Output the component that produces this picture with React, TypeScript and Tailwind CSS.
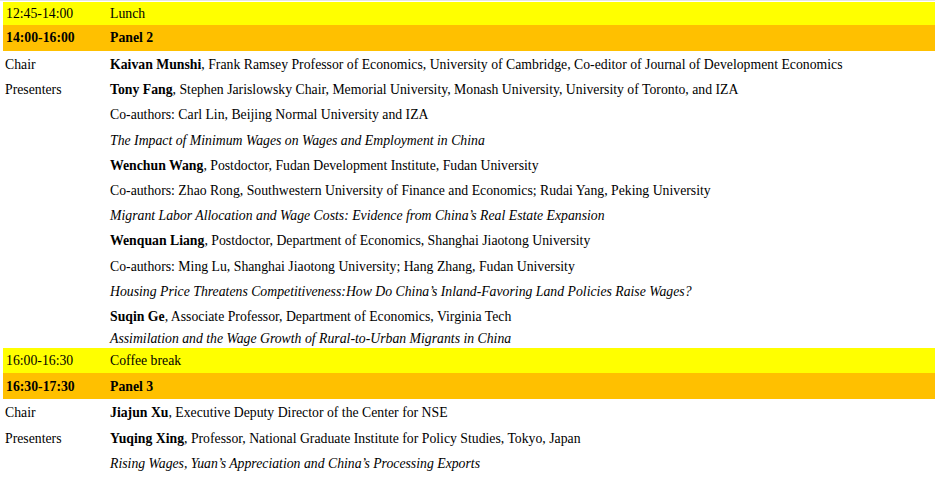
type Row = {
  label?: string;
  text: React.ReactNode;
  tight?: boolean;
};

type Block =
  | { kind: "break"; time: string; title: string; first?: boolean }
  | { kind: "panel"; time: string; title: string }
  | { kind: "rows"; rows: Row[] };

const P = ({ name, rest }: { name: string; rest: string }) => (
  <>
    <b>{name}</b>
    {rest}
  </>
);

const I = ({ children }: { children: React.ReactNode }) => <i>{children}</i>;

const schedule: Block[] = [
  { kind: "break", time: "12:45-14:00", title: "Lunch", first: true },
  { kind: "panel", time: "14:00-16:00", title: "Panel 2" },
  {
    kind: "rows",
    rows: [
      {
        label: "Chair",
        text: (
          <P
            name="Kaivan Munshi"
            rest=", Frank Ramsey Professor of Economics, University of Cambridge, Co-editor of Journal of Development Economics"
          />
        ),
      },
      {
        label: "Presenters",
        text: (
          <P
            name="Tony Fang"
            rest=", Stephen Jarislowsky Chair, Memorial University, Monash University, University of Toronto, and IZA"
          />
        ),
      },
      { text: "Co-authors: Carl Lin, Beijing Normal University and IZA" },
      { text: <I>The Impact of Minimum Wages on Wages and Employment in China</I> },
      { text: <P name="Wenchun Wang" rest=", Postdoctor, Fudan Development Institute, Fudan University" /> },
      {
        text: "Co-authors: Zhao Rong, Southwestern University of Finance and Economics; Rudai Yang, Peking University",
      },
      {
        text: <I>Migrant Labor Allocation and Wage Costs: Evidence from China’s Real Estate Expansion</I>,
      },
      {
        text: (
          <P name="Wenquan Liang" rest=", Postdoctor, Department of Economics, Shanghai Jiaotong University" />
        ),
      },
      { text: "Co-authors: Ming Lu, Shanghai Jiaotong University; Hang Zhang, Fudan University" },
      {
        text: (
          <I>Housing Price Threatens Competitiveness:How Do China’s Inland-Favoring Land Policies Raise Wages?</I>
        ),
      },
      { text: <P name="Suqin Ge" rest=", Associate Professor, Department of Economics, Virginia Tech" /> },
      {
        text: <I>Assimilation and the Wage Growth of Rural-to-Urban Migrants in China</I>,
        tight: true,
      },
    ],
  },
  { kind: "break", time: "16:00-16:30", title: "Coffee break" },
  { kind: "panel", time: "16:30-17:30", title: "Panel 3" },
  {
    kind: "rows",
    rows: [
      { label: "Chair", text: <P name="Jiajun Xu" rest=", Executive Deputy Director of the Center for NSE" /> },
      {
        label: "Presenters",
        text: (
          <P
            name="Yuqing Xing"
            rest=", Professor, National Graduate Institute for Policy Studies, Tokyo, Japan"
          />
        ),
      },
      { text: <I>Rising Wages, Yuan’s Appreciation and China’s Processing Exports</I> },
    ],
  },
];

export default function App() {
  return (
    <div className="w-[935px] h-[481px] overflow-hidden bg-white border-t border-[#e4e4e4] pt-[1px] pl-[3px] font-['Liberation_Serif','Times_New_Roman',serif] text-[13.75px] leading-[19.2px] text-black">
      {schedule.map((b, i) => {
        if (b.kind === "break")
          return (
            <div
              key={i}
              className={`flex ${b.first ? "h-[23px]" : "h-[25px]"} items-center bg-[#ffff00]`}
            >
              <div className="w-[104px] pl-[3px]">{b.time}</div>
              <div className="pl-[3px]">{b.title}</div>
            </div>
          );
        if (b.kind === "panel")
          return (
            <div key={i} className="flex h-[26px] items-center bg-[#ffc000] font-bold">
              <div className="w-[104px] pl-[3px]">{b.time}</div>
              <div className="pl-[3px]">{b.title}</div>
            </div>
          );
        return (
          <div key={i} className="pt-[1px]">
            {b.rows.map((r, j) => (
              <div key={j} className={`flex ${r.tight ? "py-0" : "py-[3px]"} whitespace-nowrap`}>
                <div className="w-[104px] shrink-0 pl-[2px]">{r.label}</div>
                <div className="pl-[3px]">{r.text}</div>
              </div>
            ))}
          </div>
        );
      })}
    </div>
  );
}
